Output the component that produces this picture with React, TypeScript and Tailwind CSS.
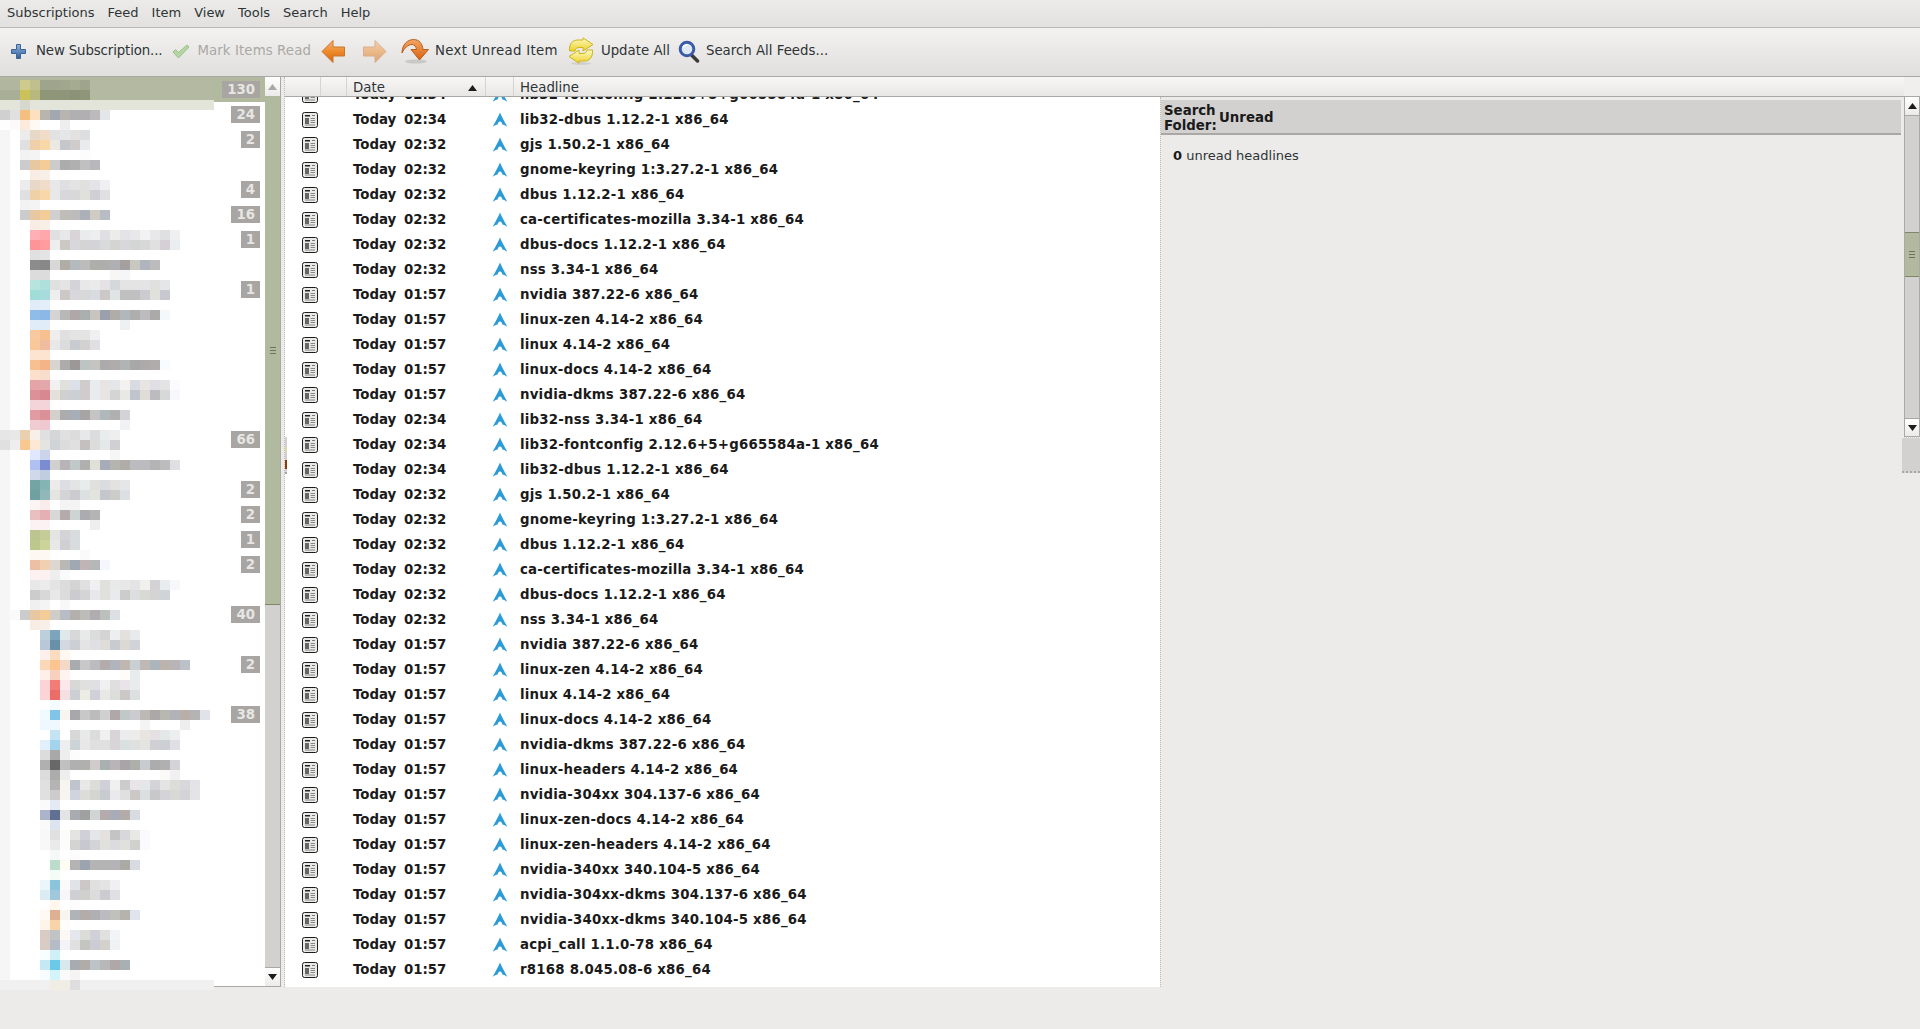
import type { FC } from "react";

const menus = ["Subscriptions", "Feed", "Item", "View", "Tools", "Search", "Help"];

// the feed names are pixelated in the picture: [top, left, cells of 10x10]
const mosaic: [number, number, string][] = [
  [80, 0, "b0b79e b0b79e cfcb8c c0c08e 9ea58c 9ea58c a0a78e a4ab90 9ea58c"],
  [90, 0, "a8af96 a8af96 ccc25a b9b97e 8e9679 8e9679 8e9679 8a9278 8e9679"],
  [110, 0, "d0d0d0 e0e0e0 f5bf80 fce0c0 b8b4ae a2a8b0 b8b4b0 b0b0b2 b0b0b2 bcbaba e4e6ea"],
  [120, 10, "fcfafa fcebdc fff9f5 ffffff ffffff eeeeee"],
  [130, 20, "ececec e8d8c8 f0dcc8 e2e2e2 e4e6e8 e4e2e0 dcdee0"],
  [140, 20, "e0e0e0 f0d0a8 f8d8a8 ece8e4 c4c8cc d0cccc e8ecee"],
  [150, 20, "f2f2f2 f4f4f4 ffffff ffffff ffffff ffffff fcfcfc"],
  [160, 20, "cccccc e8c8a0 f4cc98 cccccc acacac b0b0b0 c0c0c0 b8b8bc"],
  [170, 30, "f8ece4 f8f0e8"],
  [180, 20, "ececec e8d8c8 f0dcc8 e8e8e8 e0e0e2 e4e4e4 e0e0de e4e4e8 f0f0f2"],
  [190, 20, "e0e0e0 f0d0a8 f8d8a8 e8e8e8 d8d8dc d8d8d8 e0e0dc d0d0d4 e0e0e2"],
  [200, 20, "f2f2f2 f4f4f4"],
  [210, 20, "cccccc e8c8a0 f4cc98 d0d0d0 c0bcb8 bcbcbc acb0b8 d0ccc4 b8bcc4"],
  [220, 30, "f8ece4 f8f0e8"],
  [230, 30, "ffb0b4 ffa8ac e0e0e0 e8e8e8 d8d4d8 e8ecec eceef0 e0e0e4 ecece8 e4e4e8 e8e8ea f2f2f2 e8e8ea e0e0e2 eef0f2"],
  [240, 30, "ff9498 ff9ca0 eeeeee ccc8c4 d8d8dc d4d4d4 d4d4d8 d8dadc d4d4d0 d8d8dc d4d6d6 d8d8d8 e0e0e0 d4d0d4 eaeef0"],
  [250, 30, "e0e0e0 e4e4e4"],
  [260, 30, "8c8c8c 888888 d8d8d8 b0aca6 b4babe bcbcbc b0aeaa aeaeac b0b0b4 a4a0a0 c8c8c0 b0b4be bcbcbc"],
  [270, 30, "dcdcdc dcdcdc ffffff ffffff ffffff ffffff ffffff ffffff f8f6f4 f4f6f8"],
  [280, 30, "b8e4e0 b0e0dc e0e0e0 e4e4e4 d4d4d8 e8e8e8 eaeaea e4e2e4 d4d8da e4e4e4 e4e4e4 e4e4e6 e0e0de e4e6e8"],
  [290, 30, "a0dcd8 a8dcdc eeeeee ccc8c4 d8d8dc d8d8d8 d8dce0 ccc8c8 e0e4e4 c0c0c0 c0c0c0 ccccd0 e0e0dc c8c8d0"],
  [300, 30, "e0ecf8 e4eef8"],
  [310, 30, "90bce8 8cb8e8 d4d4d4 b8b8b8 b0a8a8 aab0b0 c8c4c0 9aa0ac b0aca8 b0b8bc aeaeae bcbcc0 acaaa8 f4f8fa"],
  [320, 30, "e0ecf8 e0ecf8 ffffff ffffff ffffff ffffff ffffff ffffff ffffff eef0f2"],
  [330, 30, "f8c8a0 f8c090 eeeeee e0e0e0 e4e4e4 e4e4e4 f0f0f2"],
  [340, 30, "f8c898 f0bca0 e8e8e8 dcdcdc c8ccd0 d4d2d0 e0e0e4"],
  [350, 30, "fce4d0 fce4d0"],
  [360, 30, "f8c090 f4b488 d8d4d0 acacac 9c9898 bcc4c4 c4c4c0 acaaaa b0acac b0b4b4 a8a8a8 acaaaa b0acac f8fcff"],
  [370, 30, "fce0cc f8dccc"],
  [380, 30, "e4a4a8 e4a8ac f2f0f0 e0e0dc dce0e8 d0cccc e8ecee e8e4e4 e4e6ea f4f2f0 d8dce0 e8e4e4 e0e0e4 e4e4e4 fafaff"],
  [390, 30, "dc9098 d88890 e4e0dc d0d0d0 ccd0d4 d0cccc e8ecee e8e4e4 d4d4d4 e8e8e4 c0c4cc e0dcd8 bcbcc0 d8d8d8 f6f8fc"],
  [400, 30, "f4d4d8 f4d4d8"],
  [410, 30, "e09ca0 dc9098 d4d0cc acacac a8aeb8 a8a4a4 c4c4c4 b0b8bc b0b0b0 d4d4d8"],
  [420, 30, "f0ccd0 f0c8d0 ffffff ffffff ffffff ffffff ffffff ffffff ffffff f0f2f4"],
  [430, 0, "e6e6e6 e8e8e8 e8d0b0 f8f0e8 e0e0e0 d4d6d8 e0e0e0 dcdcdc e6e8ea dcdcdc e8ecec eeeeee"],
  [440, 0, "e0e0e0 eeeeee f8c890 fce8d4 e4e4e0 d0d4d8 dcdcdc e0e0e0 c4c0c0 dcdcdc e4e8e8 d0d0d4"],
  [450, 30, "e0e8ff ccd4ec ffffff ffffff ffffff ffffff ffffff ffffff f6f6f6"],
  [460, 30, "b0c0f0 7c8cd0 d0d0d0 b8b4b8 c0c8c8 b0b0b0 e0e0d8 a8acb8 b4b4b0 b0aca8 bcbcc0 bcbcc0 b4b4b4 bcbcbc e0e0e4"],
  [470, 30, "d0d8ec c0cce0"],
  [480, 30, "74a4a4 84b4b4 eeeae8 dcdee4 e4e4e4 e8ecec e0e0dc dadce0 e4e2e0 e4e6e8"],
  [490, 30, "70a0a0 90b8b8 e4e4e0 d4d4d4 ccccd0 dce0e0 e4e4de c4c8cc ccccc8 dce0e4"],
  [500, 30, "fcf4f4 f8ecec ffffff f4f4f4 f4f4f4"],
  [510, 30, "e8c0c0 e4b0b4 d8d8d8 b4acac ccd4d4 acacb0 b4b4b4"],
  [520, 30, "fcf2f4 fcf2f4 ffffff ffffff ffffff ffffff eeeeee"],
  [530, 30, "bcc490 c4cc98 e4e4e4 d4d4d8 d8dcdc"],
  [540, 30, "bcc88c ccd49c e8e8e8 d0d0d4 d8dcdc"],
  [550, 30, "fdf8f2 fdf8f2 ffffff ffffff ffffff fafafa"],
  [560, 30, "ecc0a4 f0d0b0 dcd8d0 b8b8b4 a0a8b4 c0b4b4 b4b8b8 f4f8fc"],
  [570, 30, "fcf0f0 fcf0f0 eeeeee f8fafc"],
  [580, 30, "e8e8e8 ececec e4e4e4 dcdcdc d4d4d4 e0e0e0 f0f0f2 e0e0dc e8eaea e8e8e8 e4e4e4 f0f0ec d4d2d4 e8ecec f6f8fa"],
  [590, 30, "cccccc d8d8d8 e8e8e8 dcdcdc ccccd0 d4d4d4 e8e8ec e0e0dc e8eaec cccccc dcdee0 d8d8d4 d4d4d4 d0d4d8"],
  [600, 30, "f0f0f0 f4f4f4 ffffff f8f8f8"],
  [610, 10, "fafafa cccccc e8c8a0 f4cc98 d0ccc8 b8bcc4 b4b0ae bcbcb8 b0acb0 bcc0bc dce0e4"],
  [620, 30, "f8ece4 f8f0e8"],
  [630, 40, "bcd0dc 7ca4bc e0e8ec d8d8d8 e8eaea dcdcdc d4d4d4 ecefef e4e0de e8eaec"],
  [640, 40, "b8c8d8 6890a8 d4d8e0 ccd0d4 e4e4e4 e0e0e4 e0dcd8 c8ccd0 dcd8d4 d0d4d8"],
  [650, 40, "fdf0ec fcdcc0 fff8f0"],
  [660, 40, "fcd8b8 fcc490 f4d8c8 a8acb0 c8c8c8 bcbcc0 b4acac b0b4bc c0b8b0 c8d0d4 c0b8b4 acb4bc bcb4ac b8b4b8 bcc0c8"],
  [670, 40, "fef0e8 f8d0c0 fff4f0 ffffff ffffff ffffff ffffff ffffff fefcfa e8ecec"],
  [680, 40, "fcd4d8 f47c78 fce8ec d8d8d8 e0e0de e0e0e4 f0f0f0 e0dede e8e4e8 e8ecec"],
  [690, 40, "fcd4d8 ec6c68 f4e0e0 ccd0d4 ecece4 d0d0d8 e8e8e4 dcdedc ccc8c8 dce0e0"],
  [700, 50, "f4fbff"],
  [710, 40, "f0fbff 80c4e8 f8f4f0 a8a8ac c8c8c8 bcbcbc d0d0d0 b0a8a8 c0c8c8 ccccd0 bcb8b4 aca8a8 b8b8b0 b0b4b8 b8b0a8 b4b4b4 e0e4e8"],
  [720, 40, "f0f8ff f0f8ff ffffff ffffff ffffff ffffff ffffff ffffff ffffff ffffff f4f4f4 ffffff ffffff ffffff eeeeee"],
  [730, 50, "c4e4f4 ffffff d8d8d8 e8eaea dcdcdc f0f0f0 d8d4d8 ececec ececec e8e4e0 e4e0e4 e4e8e8 eceef0"],
  [740, 40, "e0f0fc a4d4ec eeeeee ccd4d8 e8e8e8 e0e0e0 e0e0e0 d8d4d8 d8e0e0 e0e0e0 e4e4e0 d0d0d4 ccd0d4 e0e0e4"],
  [750, 40, "dcdcdc a8a8a8 eeeeee fcfcfc"],
  [760, 40, "b0b0b0 686868 c0c0c0 b0b0b0 b0b0ac d0cccc a8b0b0 b8b4b8 a8a4a8 acb0a8 c8ccd0 acacac b0b0b0 d4d4d8"],
  [770, 40, "dcdcdc acacac eeeeee ffffff ffffff ffffff ffffff ffffff ffffff ffffff ffffff ffffff fcfaf8 f0f0f2"],
  [780, 40, "e0e0e0 b4b4b4 f8f4f0 c0c4cc e8e8e8 dcdcd8 d0d0d8 f0f0f0 cccccc e8e4e8 e4e6e8 d4d4d8 e4e4e4 dcdcd8 d8d8dc e4e4e8"],
  [790, 40, "e0e0e0 cccccc f8f4f0 d0d4dc dcdcd8 d4d4d0 c8ccd0 eaeaee e0e0e0 ccc8c8 dcdfe0 c8c8c8 d4d4d8 d8d8d4 d4d4d8 e4e4e6"],
  [800, 40, "fafafa e4eaf4"],
  [810, 40, "acb4cc 607090 e4e4e4 a8acb0 a0a0a0 d0d4d4 b4acac a8acb8 b4aca8 d8dce0"],
  [820, 40, "fafafa dce4f0"],
  [830, 40, "f8f8f8 e0e0e0 fcfcfa e4e4e0 d0d0d8 e4e6e8 e4e2e0 c4c4c4 d8d8dc e8e8e4 fafaff"],
  [840, 40, "f8f8f8 eaeaea fcfcfa d4d4d4 c8c8d0 d4d4d8 e0e0dc dcdce0 e0e0dc d0d0cc fafaff"],
  [850, 50, "f4f8f6 ffffff fcfcfc"],
  [860, 50, "bcdccc fffcf4 b4b4b4 9ca4b0 b4b4b4 b4b4b4 b4b4b8 acaaa4 d8dce0"],
  [870, 50, "f4fcf8"],
  [880, 40, "eaf6fa 8cc4dc fcfaf8 e0e4e8 ccc8c8 e0e0e0 e4e4e4 f0f0f2"],
  [890, 40, "dcecf4 a0c8dc f8f6f8 d0d0d4 d0d0cc dcdcdc ccccd0 e0e0e4"],
  [900, 50, "fff6ee ffffff fcfcfc"],
  [910, 40, "fff8f4 dcb090 f8f4f0 b0b4b8 b4aca8 b0b0b4 bcbcc0 c0c0bc b4b4ac e0e4ec"],
  [920, 40, "fff4e8 f8d4a8 fffdfa"],
  [930, 40, "d8ccc4 c0c4c4 fcf8f4 e4e8ec dcdcd8 d0d0d8 e0e0e0 f2f4f8"],
  [940, 40, "d8ccc4 b4bcc8 f4f4f8 e0e0e0 c4c4c0 ccccd4 d4d0cc f0f2f4"],
  [950, 40, "f8fdff d0f0f8"],
  [960, 40, "c4e8f4 6cc8e8 d8e8ec a8acb0 b0aca8 bcc4c8 b8b8b8 b0a8a8 a8b0b4"],
  [970, 40, "f8fcff d4f4fc fafafa f4f4f4"],
];

// unread counts of the rows in the feed tree, one row every 25px
const counts: (string | null)[] = [
  "130", "24", "2", null, "4", "16", "1", null, "1", null, null, null, null, null,
  "66", null, "2", "2", "1", "2", null, "40", null, "2", null, "38", null, null,
  null, null, null, null, null, null, null, null,
];

const t34 = "Today 02:34";
const t32 = "Today 02:32";
const t57 = "Today 01:57";

const block: [string, string][] = [
  [t34, "lib32-dbus 1.12.2-1 x86_64"],
  [t32, "gjs 1.50.2-1 x86_64"],
  [t32, "gnome-keyring 1:3.27.2-1 x86_64"],
  [t32, "dbus 1.12.2-1 x86_64"],
  [t32, "ca-certificates-mozilla 3.34-1 x86_64"],
  [t32, "dbus-docs 1.12.2-1 x86_64"],
  [t32, "nss 3.34-1 x86_64"],
  [t57, "nvidia 387.22-6 x86_64"],
  [t57, "linux-zen 4.14-2 x86_64"],
  [t57, "linux 4.14-2 x86_64"],
  [t57, "linux-docs 4.14-2 x86_64"],
  [t57, "nvidia-dkms 387.22-6 x86_64"],
];

const headlines: [string, string][] = [
  [t34, "lib32-fontconfig 2.12.6+5+g665584a-1 x86_64"],
  ...block,
  [t34, "lib32-nss 3.34-1 x86_64"],
  [t34, "lib32-fontconfig 2.12.6+5+g665584a-1 x86_64"],
  ...block,
  [t57, "linux-headers 4.14-2 x86_64"],
  [t57, "nvidia-304xx 304.137-6 x86_64"],
  [t57, "linux-zen-docs 4.14-2 x86_64"],
  [t57, "linux-zen-headers 4.14-2 x86_64"],
  [t57, "nvidia-340xx 340.104-5 x86_64"],
  [t57, "nvidia-304xx-dkms 304.137-6 x86_64"],
  [t57, "nvidia-340xx-dkms 340.104-5 x86_64"],
  [t57, "acpi_call 1.1.0-78 x86_64"],
  [t57, "r8168 8.045.08-6 x86_64"],
  [t57, "linux-lts 4.9.66-1 x86_64"],
];

const PlusIcon: FC = () => (
  <svg width="17" height="17" viewBox="0 0 17 17">
    <defs>
      <linearGradient id="plusFill" x1="0" y1="0" x2="0" y2="1">
        <stop offset="0" stopColor="#8fb3da" />
        <stop offset="1" stopColor="#2f5f9c" />
      </linearGradient>
    </defs>
    <path
      d="M6.500 1.500h4v5h5v4h-5v5h-4v-5h-5v-4h5z"
      fill="url(#plusFill)"
      stroke="#3a6596"
      strokeLinejoin="round"
    />
  </svg>
);

const CheckIcon: FC = () => (
  <svg width="18" height="15" viewBox="0 0 18 15">
    <path
      d="M1 8l2.500-2.500 3 3L15 1l2 2L6.500 14z"
      fill="#b4d6a2"
      stroke="#9cc088"
      strokeLinejoin="round"
    />
  </svg>
);

const ArrowIcon: FC<{ right?: boolean }> = ({ right }) => (
  <svg
    width="25"
    height="25"
    viewBox="0 0 25 25"
    className={right ? "opacity-50" : ""}
  >
    <defs>
      <linearGradient id="arrowFill" x1="0" y1="0" x2="0" y2="1">
        <stop offset="0" stopColor="#f6b27a" />
        <stop offset="0.5" stopColor="#ee8a2c" />
        <stop offset="1" stopColor="#d5650f" />
      </linearGradient>
    </defs>
    <path
      d={
        right
          ? "M13 1.500L24 12.500L13 23.500V17H1.500V8H13z"
          : "M12 1.500L1 12.500L12 23.500V17H23.500V8H12z"
      }
      fill="url(#arrowFill)"
      stroke="#c9772e"
      strokeLinejoin="round"
    />
  </svg>
);

const NextIcon: FC = () => (
  <svg width="29" height="26" viewBox="0 0 29 26">
    <defs>
      <linearGradient id="nextFill" x1="0" y1="0" x2="0" y2="1">
        <stop offset="0" stopColor="#f3a566" />
        <stop offset="1" stopColor="#d9610c" />
      </linearGradient>
    </defs>
    <ellipse cx="15" cy="23.500" rx="11" ry="2" fill="#c9c8c6" />
    <path
      d="M1 15C1 6 7 1.500 12.500 1.500C18.500 1.500 21.500 6 22 11.500H27.500L18.500 22L10 11.500H15.500C15 8.500 13.500 6.500 11 6.500C7 6.500 3.500 10 1 15Z"
      fill="url(#nextFill)"
      stroke="#b9601c"
      strokeLinejoin="round"
    />
  </svg>
);

const UpdateIcon: FC = () => (
  <svg width="26" height="28" viewBox="0 0 26 28">
    <defs>
      <linearGradient id="updFill" x1="0" y1="0" x2="0" y2="1">
        <stop offset="0" stopColor="#fffbc4" />
        <stop offset="1" stopColor="#ecd02a" />
      </linearGradient>
    </defs>
    <ellipse cx="13" cy="26.500" rx="10" ry="1.400" fill="#d0cfcb" />
    <path
      d="M1.500 14C1 6 5 3 10 3H15V.8L25 7.500L15 14V10.500H11C8.500 10.500 7.500 12 7 14Z"
      fill="url(#updFill)"
      stroke="#cbb51c"
      strokeLinejoin="round"
    />
    <path
      d="M24.500 13C25 21 21 24 16 24H11V26.200L1 19.500L11 13V16.500H15C17.500 16.500 18.500 15 19 13Z"
      fill="url(#updFill)"
      stroke="#cbb51c"
      strokeLinejoin="round"
    />
  </svg>
);

const SearchIcon: FC = () => (
  <svg width="22" height="23" viewBox="0 0 22 23">
    <path d="M14 15.500l5.500 5.500" stroke="#3a3a3a" strokeWidth="3.500" strokeLinecap="round" />
    <circle cx="9" cy="9" r="6.800" fill="#dfe9f5" stroke="#3a5ba8" strokeWidth="3" />
    <path d="M5 7.500c1-2 2.500-2.800 4.500-2.800" stroke="#fff" strokeWidth="1.400" fill="none" />
  </svg>
);

// pixel sized news page glyph of the first column
const NewsIcon: FC = () => (
  <svg width="16" height="16" viewBox="0 0 16 16" className="shrink-0">
    <rect x="0.500" y="0.500" width="15" height="15" rx="2" fill="#e9e9e7" stroke="#1c1c1c" />
    <rect x="3" y="3" width="5" height="1.500" fill="#222" />
    <rect x="3" y="6" width="4" height="6" fill="#666" />
    <path d="M8.500 6.500h4.500M8.500 8.500h4.500M8.500 10.500h4.500M3 13h10" stroke="#888" />
    <path d="M10 3.500h3" stroke="#777" />
  </svg>
);

const ArchIcon: FC = () => (
  <svg width="16" height="16" viewBox="0 0 16 16" className="shrink-0">
    <path
      d="M8 .5C6.500 4 4 9 .7 14.800C2.500 13.600 4 13 5.700 12.600C5.600 11.500 6.500 9.500 8 9.500C9.500 9.500 10.400 11.500 10.300 12.600C12 13 13.500 13.600 15.300 14.800C12 9 9.500 4 8 .5Z"
      fill="#2a9bd6"
    />
  </svg>
);

const ScrollArrow: FC<{ down?: boolean; faded?: boolean }> = ({ down, faded }) => (
  <svg width="9" height="6" viewBox="0 0 9 6">
    <path d={down ? "M0 0h9L4.500 6z" : "M0 6h9L4.500 0z"} fill={faded ? "#a9a8a5" : "#1c1c1c"} />
  </svg>
);

const ScrollButton: FC<{ down?: boolean; faded?: boolean; className?: string }> = ({
  down,
  faded,
  className,
}) => (
  <div
    className={`flex h-[19px] items-center justify-center bg-gradient-to-b from-[#ffffff] to-[#ecebe9] ${className ?? ""}`}
  >
    <ScrollArrow down={down} faded={faded} />
  </div>
);

const Grip: FC = () => (
  <div className="flex flex-col gap-[2px]">
    <div className="h-px w-[6px] bg-[#6e7360]" />
    <div className="h-px w-[6px] bg-[#6e7360]" />
    <div className="h-px w-[6px] bg-[#6e7360]" />
  </div>
);

const FeedTree: FC = () => (
  <div className="relative w-[265px] bg-white">
    <div className="h-[25px] bg-[#b1b99f]" />
    <svg
      width="265"
      height="913"
      viewBox="0 77 265 913"
      className="absolute top-0 left-0 overflow-visible"
    >
      <rect x="0" y="130" width="10" height="850" fill="#f6f6f6" />
      <rect x="90" y="80" width="124" height="20" fill="#b3baa1" />
      <rect x="0" y="100" width="214" height="10" fill="#e3e5da" />
      <rect x="20" y="100" width="10" height="10" fill="#d6d8cd" />
      {mosaic.map(([top, left, cells]) =>
        cells
          .split(" ")
          .map((c, i) => (
            <rect
              key={`${top}-${i}`}
              x={left + i * 10}
              y={top}
              width="10"
              height="10"
              fill={`#${c}`}
            />
          ))
      )}
      <rect x="0" y="980" width="214" height="10" fill="#f0f0f0" />
      <rect x="50" y="980" width="20" height="10" fill="#f0eee4" />
      <rect x="70" y="980" width="10" height="10" fill="#dedede" />
    </svg>
    <div className="absolute top-0 right-[5px] left-0 flex flex-col">
      {counts.map((count, i) => (
        <div key={i} className="flex h-[25px] items-center justify-end">
          {count && (
            <span className="h-[17px] bg-[#a8a5a2] px-[5px] text-[13.33px] leading-[17px] font-bold text-[#e6e6e4]">
              {count}
            </span>
          )}
        </div>
      ))}
    </div>
  </div>
);

const ToolButton: FC<{ label: string; faded?: boolean; className?: string }> = ({
  label,
  faded,
  className,
}) => (
  <span className={`whitespace-nowrap ${faded ? "text-[#a9a8a5]" : "text-[#2e3436]"} ${className ?? ""}`}>
    {label}
  </span>
);

const App: FC = () => {
  return (
    <div className="flex h-[1029px] w-[1920px] flex-col overflow-hidden bg-[#ecebe9] font-['DejaVu_Sans',sans-serif] text-[13.33px] text-[#2e3436]">
      <div className="flex h-[28px] shrink-0 items-center gap-[13px] border-b border-[#b9b8b5] bg-gradient-to-b from-[#ecebe9] to-[#e2e1df] pb-[2px] pl-[7px] text-[13px]">
        {menus.map((m) => (
          <span key={m}>{m}</span>
        ))}
      </div>

      <div className="flex h-[49px] shrink-0 items-center border-b border-[#aaa9a6] bg-gradient-to-b from-[#f3f2f1] to-[#e0dfdd] pb-[2px] pl-[10px]">
        <PlusIcon />
        <ToolButton label="New Subscription..." className="ml-[9px] tracking-[-0.13px]" />
        <div className="ml-[10px]">
          <CheckIcon />
        </div>
        <ToolButton label="Mark Items Read" faded className="ml-[7px] tracking-[0.1px]" />
        <div className="ml-[10px]">
          <ArrowIcon />
        </div>
        <div className="ml-[16px]">
          <ArrowIcon right />
        </div>
        <div className="ml-[14px]">
          <NextIcon />
        </div>
        <ToolButton label="Next Unread Item" className="ml-[5px] tracking-[0.3px]" />
        <div className="ml-[10px]">
          <UpdateIcon />
        </div>
        <ToolButton label="Update All" className="ml-[7px]" />
        <div className="ml-[8px]">
          <SearchIcon />
        </div>
        <ToolButton label="Search All Feeds..." className="ml-[6px]" />
      </div>

      <div className="flex h-[910px] shrink-0">
        <div className="flex w-[281px] shrink-0 border-b border-[#a9a8a5]">
          <FeedTree />
          <div className="flex w-[16px] flex-col border-r border-[#a9a8a5] bg-[#d2d1cf]">
            <ScrollButton faded />
            <div className="flex h-[509px] items-center justify-center border-b border-[#7f876a] bg-[#b1b99f]">
              <Grip />
            </div>
            <div className="flex-1" />
            <ScrollButton down className="border-t border-[#a9a8a5]" />
          </div>
        </div>

        <div className="w-[4px] shrink-0 border-r border-dotted border-[#bdbcb9]" />

        <div className="flex min-w-0 flex-1 flex-col">
          <div className="flex h-[20px] shrink-0 border-b border-[#a9a8a5] bg-gradient-to-b from-[#f8f7f6] to-[#e8e7e5] leading-[22px]">
            <div className="w-[36px] border-r border-[#d5d4d1]" />
            <div className="w-[26px] border-r border-[#d5d4d1]" />
            <div className="flex w-[139px] items-center justify-between border-r border-[#d5d4d1] pt-[2px] pr-[8px] pl-[6px] leading-[18px]">
              <span>Date</span>
              <ScrollArrow />
            </div>
            <div className="w-[28px] border-r border-[#d5d4d1]" />
            <div className="flex-1 pl-[6px]">Headline</div>
            <div className="w-[16px] bg-[#f0efed]" />
          </div>

          <div className="flex min-h-0 flex-1">
            <div className="relative w-[875px] shrink-0 overflow-hidden bg-white">
              <div className="-mt-[15px]">
                {headlines.map(([when, title], i) => (
                  <div
                    key={i}
                    className="flex h-[25px] items-center font-bold whitespace-nowrap text-[#1a1a1a]"
                  >
                    <div className="flex w-[62px] shrink-0 justify-end pr-[29px] pl-[15px]">
                      <NewsIcon />
                    </div>
                    <span className="w-[139px] shrink-0 pl-[6px] [word-spacing:3px]">{when}</span>
                    <div className="flex w-[28px] shrink-0 justify-center">
                      <ArchIcon />
                    </div>
                    <span className="pl-[6px] tracking-[0.22px]">{title}</span>
                  </div>
                ))}
              </div>
              {/* collapsed pane handle that sticks out over the list */}
              <div className="absolute top-[340px] left-0 flex h-[37px] w-[2px] flex-col border-b-2 border-[#a9a8a5] bg-[#d2d1cf]">
                <div className="mt-[10px] h-[5px] bg-[#dcd9a0]" />
                <div className="mt-[8px] h-[9px] bg-[#8b3a00]" />
              </div>
            </div>

            <div className="flex min-w-0 flex-1 border-l border-dotted border-[#bdbcb9]">
              <div className="flex min-w-0 flex-1 flex-col pt-[3px]">
                <div className="mr-[1px] flex h-[35px] shrink-0 items-center gap-[4px] border-b-2 border-[#a9a8a5] bg-[#d2d1cf] pt-[2px] pl-[3px] leading-[15px] font-bold text-[#1a1a1a]">
                  <span className="w-[51px]">Search Folder:</span>
                  <span>Unread</span>
                </div>
                <div className="pt-[12px] pl-[12px] text-[13px] leading-[18px]">
                  <b className="text-[#1a1a1a]">0</b> unread headlines
                </div>
              </div>

              <div className="w-[18px] shrink-0">
                <div className="ml-[2px] flex w-[16px] flex-col border-x border-[#a9a8a5] bg-[#d2d1cf]">
                  <ScrollButton className="border-b border-[#a9a8a5]" />
                  <div className="mt-[116px] flex h-[45px] items-center justify-center border-y border-[#7f876a] bg-[#b1b99f]">
                    <Grip />
                  </div>
                  <div className="h-[141px]" />
                  <ScrollButton down className="border-y border-[#a9a8a5]" />
                </div>
                <div className="h-[36px] border-t border-b-2 border-dotted border-b-[#a9a8a5] border-t-[#f4f4f4] bg-[#d2d1cf]" />
              </div>
            </div>
          </div>
        </div>
      </div>
    </div>
  );
};

export default App;
